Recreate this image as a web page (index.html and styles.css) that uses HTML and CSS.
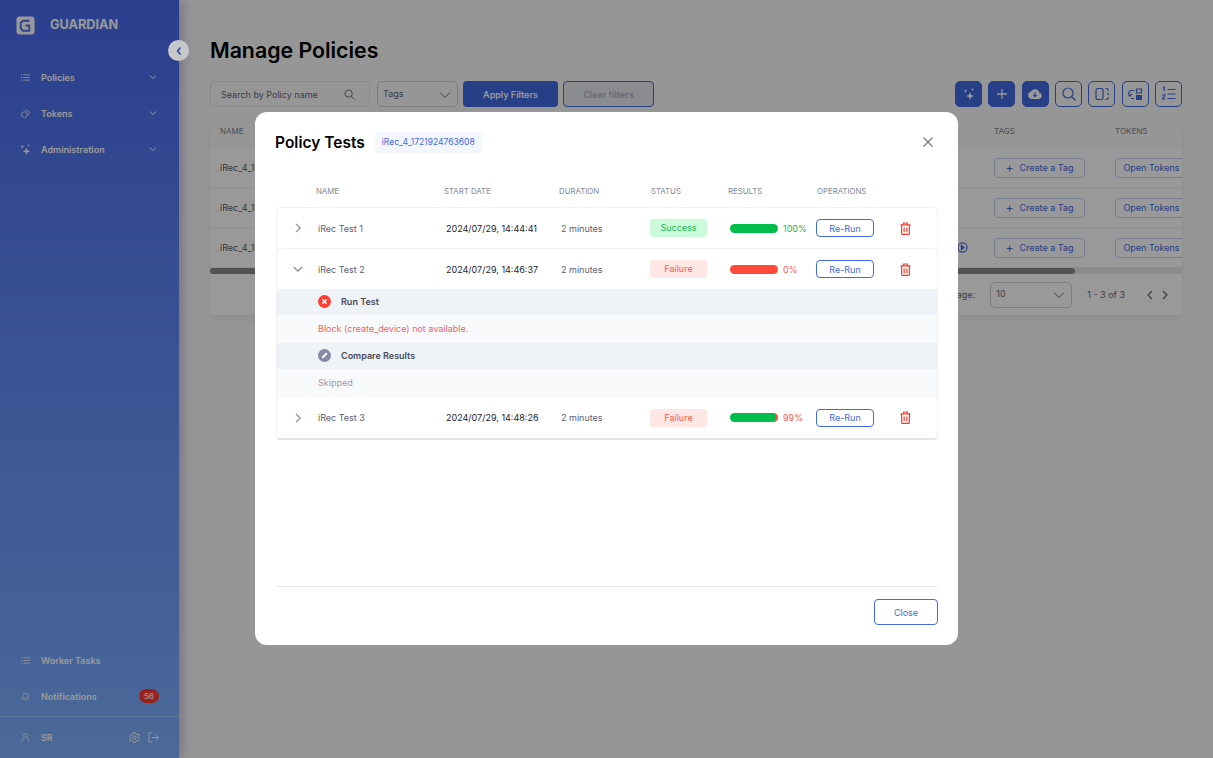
FILE: index.html
```html
<!DOCTYPE html>
<html lang="en">
<head>
    <meta charset="UTF-8">
    <title>Guardian - Manage Policies</title>
    <link rel="stylesheet" href="styles.css">
</head>
<body>
    <aside class="sidebar">
        <div class="logo">
            <svg class="logo-mark" viewBox="0 0 20 20"><path d="M4 .5h12A3.5 3.5 0 0 1 19.500 4v12a3.500 3.500 0 0 1-3.500 3.500H4A3.500 3.500 0 0 1 .5 16V4A3.500 3.500 0 0 1 4 .5z" fill="#fff"/><path d="M14 5H7.500L5 7v6l2.500 2.500H14V10h-4" fill="none" stroke="#4a6fe8" stroke-width="2"/></svg>
            <span>GUARDIAN</span>
        </div>
        <nav class="nav">
            <a class="nav-item"><svg class="nav-icon" viewBox="0 0 12 12"><path d="M0 2.500h1.500M3 2.500h9M0 6h1.500M3 6h9M0 9.500h1.500M3 9.500h9"/></svg><span>Policies</span><svg class="nav-chev" viewBox="0 0 8 8"><path d="M1 2.500l3 3 3-3"/></svg></a>
            <a class="nav-item"><svg class="nav-icon" viewBox="0 0 12 12"><circle cx="4.500" cy="7.500" r="3.800"/><path d="M6 2.200A3.500 3.500 0 0 1 11 5.500a3.500 3.500 0 0 1-2.500 3"/></svg><span>Tokens</span><svg class="nav-chev" viewBox="0 0 8 8"><path d="M1 2.500l3 3 3-3"/></svg></a>
            <a class="nav-item"><svg class="nav-icon nav-icon-fill" viewBox="0 0 12 12"><path d="M7 4l1.100 2.900L11 8 8.100 9.100 7 12 5.900 9.100 3 8l2.900-1.100zM2.500 1l.6 1.400 1.400.6-1.400.6L2.500 5l-.6-1.400L.5 3l1.400-.6zM9.500 0l.4 1.100 1.100.4-1.100.4-.4 1.100-.4-1.100L8 1.500l1.100-.4z"/></svg><span>Administration</span><svg class="nav-chev" viewBox="0 0 8 8"><path d="M1 2.500l3 3 3-3"/></svg></a>
        </nav>
        <div class="nav nav-bottom">
            <a class="nav-item"><svg class="nav-icon" viewBox="0 0 12 12"><path d="M0 2.500h1.500M3 2.500h9M0 6h1.500M3 6h9M0 9.500h1.500M3 9.500h9"/></svg><span>Worker Tasks</span></a>
            <a class="nav-item"><svg class="nav-icon" viewBox="0 0 12 12"><path d="M1.500 9h9L9.500 7.500V5a3.500 3.500 0 0 0-7 0v2.500zM5 11h2"/></svg><span>Notifications</span><b class="badge">56</b></a>
        </div>
        <div class="user">
            <svg class="nav-icon" viewBox="0 0 12 12"><circle cx="6" cy="3.500" r="2.500"/><path d="M1.500 11.500c0-3 2-4.500 2.500-5.500M10.500 11.500c0-3-2-4.500-2.500-5.500"/></svg>
            <span>SR</span>
            <svg class="user-icon" viewBox="0 0 12 12"><circle cx="6" cy="6" r="1.800"/><path d="M4.800.6h2.400l.3 1.500 1.300.7 1.400-.5 1.200 2.100-1.100 1v1.200l1.100 1-1.200 2.100-1.400-.5-1.300.7-.3 1.500H4.800l-.3-1.500-1.300-.7-1.400.5L.6 8.100l1.100-1V5.900l-1.100-1 1.200-2.100 1.400.5 1.300-.7z"/></svg>
            <svg class="user-icon" viewBox="0 0 12 12"><path d="M4.500 1H1v10h3.500M4 6h7.500M8.800 3.300L11.500 6 8.800 8.700"/></svg>
        </div>
    </aside>

    <main class="main">
        <h1>Manage Policies</h1>
        <div class="toolbar">
            <div class="search"><span>Search by Policy name</span><svg viewBox="0 0 12 12"><circle cx="5" cy="5" r="4"/><path d="M8 8l3.500 3.500"/></svg></div>
            <div class="select select-tags"><span>Tags</span><svg viewBox="0 0 12 8"><path d="M1 1.500l5 5 5-5"/></svg></div>
            <button class="btn-apply">Apply Filters</button>
            <button class="btn-clear">Clear filters</button>
            <div class="tools">
                <button class="tool tool-solid"><svg viewBox="0 0 16 16"><path class="fill" d="M9 6l1.100 2.900L13 10l-2.900 1.100L9 14l-1.100-2.900L5 10l2.900-1.100zM4.500 3l.5 1.500L6.500 5 5 5.500 4.500 7 4 5.500 2.500 5 4 4.500zM11.500 2l.4 1.100 1.100.4-1.100.4-.4 1.100-.4-1.100-1.100-.4 1.100-.4z"/></svg></button>
                <button class="tool tool-solid"><svg viewBox="0 0 16 16"><path d="M8 3v10M3 8h10" stroke-width="1.300"/></svg></button>
                <button class="tool tool-solid"><svg viewBox="0 0 18 16"><path class="fill" d="M5 13.500a4 4 0 0 1-.6-7.900 5 5 0 0 1 9.500 1A3.500 3.500 0 0 1 13.500 13.500z"/><path class="cut" d="M9 6v5M7 9l2 2 2-2" stroke-width="1.300"/></svg></button>
                <button class="tool"><svg viewBox="0 0 16 16"><circle cx="7" cy="7" r="5"/><path d="M10.500 10.500L14.500 14.500"/></svg></button>
                <button class="tool"><svg viewBox="0 0 16 16"><rect x="2" y="2.500" width="7" height="11" rx="1.500"/><path d="M11.500 2.500h1A1.500 1.500 0 0 1 14 4v1M14 7v2M14 11v1a1.500 1.500 0 0 1-1.500 1.500h-1"/></svg></button>
                <button class="tool"><svg viewBox="0 0 16 16"><path d="M9.500 3h5v4h-5z"/><path class="fill" d="M9 9h6v5H9z"/><path d="M7 4.500H4.500a3 3 0 0 0-2 5.200M1 7l1.500 3 2.500-2M4 12.500h3"/></svg></button>
                <button class="tool"><svg viewBox="0 0 16 16"><path d="M6.500 3.500h8M6.500 8h8M6.500 12.500h8M2 2l1.200-.7v4M1.500 9.500c0-1.300 2.500-1.300 2.500 0 0 1-2.500 2-2.500 3.500H4.200"/></svg></button>
            </div>
        </div>
        <section class="card">
            <div class="bg-grid bg-head"><span>NAME</span><span>TAGS</span><span>TOKENS</span></div>
            <div class="bg-grid bg-row"><span>iRec_4_1721924763608</span><button class="btn-tag"><i>+</i>Create a Tag</button><button class="btn-token">Open Tokens</button></div>
            <div class="bg-grid bg-row"><span>iRec_4_1721924763608</span><button class="btn-tag"><i>+</i>Create a Tag</button><button class="btn-token">Open Tokens</button></div>
            <div class="bg-grid bg-row"><div class="name-cell"><span>iRec_4_1721924763608</span><svg class="play" viewBox="0 0 12 12"><circle cx="6" cy="6" r="5"/><path d="M4.800 3.800L7.500 6 4.800 8.200z" fill="currentColor"/></svg></div><button class="btn-tag"><i>+</i>Create a Tag</button><button class="btn-token">Open Tokens</button></div>
            <div class="scrollbar"><div class="scrollbar-thumb"></div></div>
            <div class="pager">
                <span>Items per page:</span>
                <div class="select select-size"><span>10</span><svg viewBox="0 0 12 8"><path d="M1 1.500l5 5 5-5"/></svg></div>
                <span class="pager-range">1 - 3 of 3</span>
                <svg class="pager-arrow" viewBox="0 0 8 10"><path d="M6 1L2 5l4 4"/></svg>
                <svg class="pager-arrow" viewBox="0 0 8 10"><path d="M2 1l4 4-4 4"/></svg>
            </div>
        </section>
    </main>

    <div class="overlay">
        <div class="modal">
            <header class="modal-head">
                <h2>Policy Tests</h2>
                <span class="policy-tag">iRec_4_1721924763608</span>
                <svg class="modal-x" viewBox="0 0 10 10"><path d="M.5.5l9 9M9.500.5l-9 9"/></svg>
            </header>
            <div class="test-head"><span></span><span>NAME</span><span>START DATE</span><span>DURATION</span><span>STATUS</span><span>RESULTS</span><span>OPERATIONS</span></div>
            <div class="test-table">
                <div class="test-row">
                    <svg class="row-chev" viewBox="0 0 10 10"><path d="M3 .8L7.200 5 3 9.200"/></svg>
                    <span>iRec Test 1</span>
                    <span class="dark">2024/07/29, 14:44:41</span>
                    <span>2 minutes</span>
                    <span class="status status-ok">Success</span>
                    <div class="result"><div class="bar bar-ok"></div><span class="pct-ok">100%</span></div>
                    <button class="btn-rerun">Re-Run</button>
                    <svg class="trash" viewBox="0 0 12 14"><path d="M.5 3h11M4 3V1h4v2M1.800 3v9.500a1 1 0 0 0 1 1h6.400a1 1 0 0 0 1-1V3M4.500 6v5M7.500 6v5"/></svg>
                </div>
                <div class="test-row">
                    <svg class="row-chev" viewBox="0 0 10 10"><path d="M.8 3L5 7.200 9.200 3"/></svg>
                    <span>iRec Test 2</span>
                    <span class="dark">2024/07/29, 14:46:37</span>
                    <span>2 minutes</span>
                    <span class="status status-fail">Failure</span>
                    <div class="result"><div class="bar bar-fail"></div><span class="pct-fail">0%</span></div>
                    <button class="btn-rerun">Re-Run</button>
                    <svg class="trash" viewBox="0 0 12 14"><path d="M.5 3h11M4 3V1h4v2M1.800 3v9.500a1 1 0 0 0 1 1h6.400a1 1 0 0 0 1-1V3M4.500 6v5M7.500 6v5"/></svg>
                </div>
                <div class="details">
                    <div class="step-head">
                        <svg viewBox="0 0 13 13"><circle class="step-fail" cx="6.500" cy="6.500" r="6.500"/><path d="M4.300 4.300l4.400 4.400M8.700 4.300l-4.400 4.400"/></svg>
                        <span>Run Test</span>
                    </div>
                    <div class="step-msg step-msg-error">Block (create_device) not available.</div>
                    <div class="step-head">
                        <svg viewBox="0 0 13 13"><circle class="step-skip" cx="6.500" cy="6.500" r="6.500"/><path d="M3.800 9.200l.5-2 3.700-3.700 1.500 1.500-3.700 3.700z" class="step-pen"/></svg>
                        <span>Compare Results</span>
                    </div>
                    <div class="step-msg step-msg-skip">Skipped</div>
                </div>
                <div class="test-row">
                    <svg class="row-chev" viewBox="0 0 10 10"><path d="M3 .8L7.200 5 3 9.200"/></svg>
                    <span>iRec Test 3</span>
                    <span class="dark">2024/07/29, 14:48:26</span>
                    <span>2 minutes</span>
                    <span class="status status-fail">Failure</span>
                    <div class="result"><div class="bar bar-mixed"></div><span class="pct-fail">99%</span></div>
                    <button class="btn-rerun">Re-Run</button>
                    <svg class="trash" viewBox="0 0 12 14"><path d="M.5 3h11M4 3V1h4v2M1.800 3v9.500a1 1 0 0 0 1 1h6.400a1 1 0 0 0 1-1V3M4.500 6v5M7.500 6v5"/></svg>
                </div>
            </div>
            <footer class="modal-foot">
                <button class="btn-close">Close</button>
            </footer>
        </div>
    </div>

    <button class="collapse"><svg viewBox="0 0 8 10"><path d="M5.500 1.500L2.500 5l3 3.500"/></svg></button>
</body>
</html>
```

FILE: styles.css
```css
* {
    box-sizing: border-box;
}
body {
    margin: 0;
    height: 758px;
    display: flex;
    overflow: hidden;
    background: #fafbfc;
    font-family: Inter, "Liberation Sans", sans-serif;
    color: #23252e;
}
button {
    font-family: inherit;
    cursor: pointer;
}
svg {
    fill: none;
    stroke: currentColor;
    flex: none;
}

/* sidebar */
.sidebar {
    width: 179px;
    flex: none;
    display: flex;
    flex-direction: column;
    background: linear-gradient(180deg, #4869ee 0%, #7db0ff 100%);
    box-shadow: 2px 0 12px rgba(70, 40, 120, 0.35);
    color: #fff;
}
.logo {
    display: flex;
    gap: 15px;
    padding: 16px 0 0 16px;
    height: 59px;
    align-items: flex-start;
    font-size: 12.700px;
    font-weight: 700;
}
.logo span {
    line-height: 18px;
}
.logo-mark {
    width: 19px;
    height: 19px;
    stroke: none;
}
.nav {
    display: flex;
    flex-direction: column;
}
.nav-bottom {
    margin-top: auto;
    padding-bottom: 2px;
    border-bottom: 1px solid rgba(255, 255, 255, 0.3);
}
.nav-item {
    height: 36px;
    display: flex;
    align-items: center;
    padding-left: 21px;
    font-size: 9px;
    font-weight: 600;
}
.nav-icon {
    width: 9px;
    height: 9px;
    margin-right: 11px;
}
.nav-icon-fill {
    width: 11px;
    height: 11px;
    margin-left: -1px;
    margin-right: 10px;
    fill: #fff;
    stroke: none;
}
.nav-chev {
    width: 8px;
    height: 8px;
    margin-left: auto;
    margin-right: 22px;
}
.badge {
    margin-left: auto;
    margin-right: 20px;
    width: 20px;
    height: 14px;
    border-radius: 7px;
    background: #ff3b30;
    font-size: 8px;
    font-weight: 500;
    line-height: 14px;
    text-align: center;
}
.user {
    height: 41px;
    display: flex;
    align-items: center;
    padding: 0 20px 0 21px;
    font-size: 9px;
    font-weight: 600;
}
.user-icon {
    width: 11px;
    height: 11px;
    margin-left: 8px;
}
.user span {
    margin-right: auto;
}
.collapse {
    position: fixed;
    left: 168px;
    top: 40px;
    width: 21px;
    height: 21px;
    padding: 0;
    border: none;
    border-radius: 50%;
    background: #c6c8cc;
    color: #2f4596;
    display: flex;
    align-items: center;
    justify-content: center;
}
.collapse svg {
    width: 8px;
    height: 10px;
    stroke-width: 1.500;
}

/* page behind the dialog */
.main {
    flex: 1;
    min-width: 0;
    padding: 37px 31px 0;
}
h1 {
    margin: 0 0 17px;
    font-size: 21.300px;
    line-height: 27px;
    font-weight: 600;
    color: #000;
}
.toolbar {
    display: flex;
    height: 26px;
    gap: 6px;
}
.search {
    width: 160px;
    border: 1px solid #e3e5ea;
    border-radius: 5px;
    display: flex;
    align-items: center;
    justify-content: space-between;
    padding: 0 14px 0 10px;
    font-size: 9px;
    color: #666a75;
}
.search svg {
    width: 11px;
    height: 11px;
}
.select {
    border: 1px solid #d0d3da;
    border-radius: 5px;
    display: flex;
    justify-content: space-between;
    font-size: 9px;
    color: #666a75;
}
.select svg {
    width: 12px;
    height: 8px;
    margin-top: 3px;
}
.select-tags {
    width: 81px;
    margin-left: 1px;
    padding: 6px 6px 0 5px;
}
.btn-apply {
    width: 95px;
    margin-left: -1px;
    border: none;
    border-radius: 4px;
    background: #4169e2;
    color: #fff;
    font-size: 9px;
    font-weight: 600;
}
.btn-clear {
    width: 91px;
    margin-left: -1px;
    border: 1px solid #4169e2;
    border-radius: 4px;
    background: #e8e9ee;
    color: #aeb2bd;
    font-size: 9px;
    font-weight: 600;
}
.tools {
    margin-left: auto;
    display: flex;
    gap: 6.330px;
}
.tool {
    width: 27px;
    height: 26px;
    padding: 0;
    border: 1px solid #4169e2;
    border-radius: 5px;
    background: transparent;
    color: #4169e2;
    display: flex;
    align-items: center;
    justify-content: center;
}
.tool svg {
    width: 16px;
    height: 16px;
    stroke-width: 1.200;
}
.tool .fill {
    fill: currentColor;
    stroke: none;
}
.tool-solid {
    background: #4169e2;
    color: #fff;
}
.tool-solid .cut {
    stroke: #4169e2;
}
.card {
    margin-top: 13px;
    width: 972px;
    overflow: hidden;
    border-radius: 6px;
    box-shadow: 0 4px 10px rgba(0, 0, 0, 0.06);
    font-size: 9px;
    color: #5a5e6a;
}
.bg-grid {
    display: grid;
    grid-template-columns: 774px 121px 80px;
    padding-left: 10px;
    align-items: center;
}
.bg-head {
    height: 28px;
    padding-bottom: 6px;
    font-size: 8px;
    color: #7d818c;
}
.bg-row {
    height: 40px;
    background: #fff;
    border-bottom: 1px solid #f0f1f4;
}
.name-cell {
    display: flex;
    justify-content: space-between;
    align-items: center;
    padding-right: 26px;
}
.play {
    width: 11px;
    height: 11px;
    color: #4169e2;
    stroke-width: 1.300;
}
.btn-tag,
.btn-token {
    height: 20px;
    padding: 0;
    border: 1px solid #c5d0f5;
    border-radius: 4px;
    background: transparent;
    color: #4169e2;
    font-size: 9px;
    white-space: nowrap;
}
.btn-tag {
    width: 91px;
}
.btn-tag i {
    font-style: normal;
    font-size: 12px;
    line-height: 9px;
    margin-right: 6px;
    vertical-align: -1px;
}
.btn-token {
    width: 73px;
}
.scrollbar {
    height: 6px;
    background: #e8e9ec;
}
.scrollbar-thumb {
    width: 865px;
    height: 6px;
    border-radius: 3px;
    background: #8a8a8a;
}
.pager {
    height: 41px;
    background: #fff;
    display: flex;
    align-items: center;
    justify-content: flex-end;
    padding-right: 13px;
    color: #666a75;
}
.select-size {
    width: 82px;
    height: 26px;
    margin: 0 15px;
    padding: 5px 6px 0 5px;
}
.pager-range {
    margin-right: 14px;
}
.pager-arrow {
    width: 8px;
    height: 10px;
    margin-left: 7px;
    stroke-width: 1.200;
}

/* dialog */
.overlay {
    position: fixed;
    inset: 0;
    padding-bottom: 1px;
    background: rgba(0, 0, 0, 0.4);
    display: flex;
    align-items: center;
    justify-content: center;
}
.modal {
    width: 703px;
    height: 533px;
    background: #fff;
    border-radius: 12px;
    padding: 0 20px 20px 20px;
    display: flex;
    flex-direction: column;
}
.modal-head {
    display: flex;
    align-items: center;
    height: 62px;
    padding-bottom: 2px;
}
.modal-head h2 {
    margin: 0 10px 0 0;
    font-size: 15.500px;
    font-weight: 600;
    color: #000;
}
.policy-tag {
    height: 21px;
    padding: 0 7px;
    border-radius: 4px;
    background: #f4f6fd;
    color: #4169e2;
    font-size: 8.500px;
    line-height: 21px;
}
.modal-x {
    width: 10px;
    height: 10px;
    margin-left: auto;
    margin-right: 5px;
    color: #6d7283;
    stroke-width: 1.100;
}
.test-head {
    display: grid;
    grid-template-columns: 41px 128px 115px 92px 77px 89px 100px;
    align-items: center;
    height: 33px;
    font-size: 7.800px;
    color: #848999;
}
.test-table {
    margin-left: 1px;
    width: 662px;
    border: 1px solid #eff0f3;
    border-bottom: 2px solid #e1e5ea;
    border-radius: 4px;
    font-size: 9px;
    color: #5c6070;
}
.test-row {
    display: grid;
    grid-template-columns: 41px 128px 115px 89px 79px 87px 80px 12px;
    align-items: center;
    height: 41px;
    border-bottom: 1px solid #eff0f3;
}
.test-row:last-child {
    border-bottom: none;
}
.dark {
    color: #23252e;
}
.row-chev {
    width: 10px;
    height: 10px;
    margin-left: 16px;
    color: #848999;
    stroke-width: 1.200;
}
.status {
    width: 57px;
    height: 18px;
    border-radius: 3px;
    text-align: center;
    line-height: 18px;
}
.status-ok {
    background: #ccfbdb;
    color: #19b751;
}
.status-fail {
    background: #ffe7e5;
    color: #ff5a50;
}
.result {
    display: flex;
    align-items: center;
    gap: 5px;
    margin-left: 1px;
}
.bar {
    width: 48px;
    height: 9px;
    border-radius: 5px;
}
.bar-ok {
    background: #00bd4c;
}
.bar-fail {
    background: #ff4a3a;
}
.bar-mixed {
    background: linear-gradient(90deg, #00bd4c 93%, #ff4a3a 93%);
}
.pct-ok {
    color: #19b751;
}
.pct-fail {
    color: #ff5a50;
}
.btn-rerun {
    width: 58px;
    height: 18px;
    padding: 0;
    border: 1px solid #4169e2;
    border-radius: 4px;
    background: #fff;
    color: #4169e2;
    font-size: 9px;
}
.trash {
    width: 11px;
    height: 13px;
    margin-left: 4px;
    color: #f33a2e;
    stroke-width: 1.300;
}
.details {
    margin-top: -1px;
}
.step-head {
    display: flex;
    align-items: center;
    gap: 10px;
    height: 26px;
    padding: 0 0 1px 41px;
    background: #eff2f6;
    font-weight: 600;
    color: #464a57;
}
.step-head svg {
    width: 13px;
    height: 13px;
    color: #fff;
    stroke-width: 1.500;
}
.step-fail {
    fill: #ff3d30;
    stroke: none;
}
.step-skip {
    fill: #848ba3;
    stroke: none;
}
.step-pen {
    fill: #fff;
    stroke: none;
}
.step-msg {
    height: 28px;
    padding-left: 41px;
    background: #f8f9fb;
    line-height: 28px;
}
.step-msg-error {
    color: #f5645c;
}
.step-msg-skip {
    color: #9a9eac;
}
.modal-foot {
    margin-top: auto;
    margin-left: 1px;
    padding-top: 12px;
    border-top: 1px solid #eaeaec;
    display: flex;
    justify-content: flex-end;
}
.btn-close {
    width: 64px;
    height: 26px;
    padding: 0;
    border: 1px solid #4169e2;
    border-radius: 4px;
    background: #fff;
    color: #4169e2;
    font-size: 9px;
}
```
